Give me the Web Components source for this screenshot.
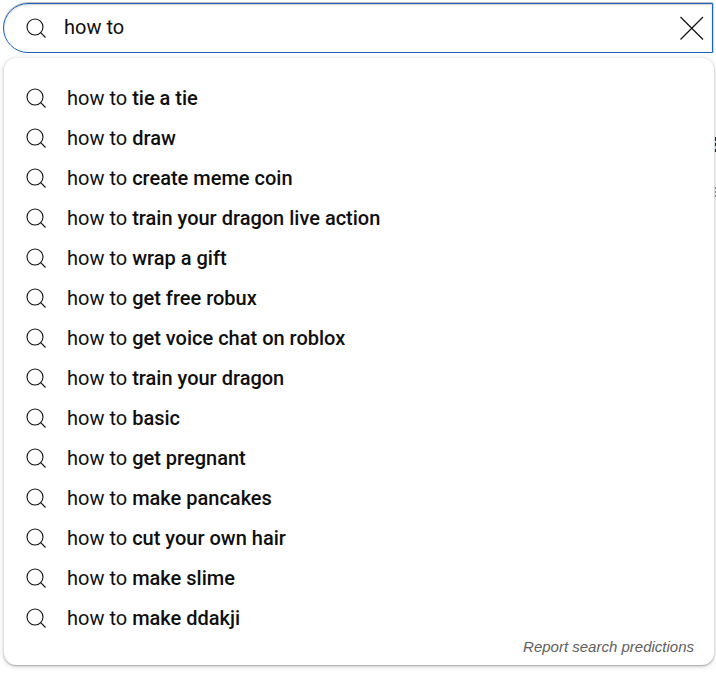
<!DOCTYPE html>
<html>
<head>
<meta charset="utf-8">
<style>
  html, body { margin: 0; padding: 0; background: #fff; }
  body { width: 716px; height: 675px; overflow: hidden; font-family: Roboto, sans-serif; color: #0f0f0f; }
  .page { display: flex; flex-direction: column; padding: 3px 2px 0 3px; gap: 5px; }
</style>
</head>
<body>
<edge-peek></edge-peek>
<div class="page">
  <search-box value="how to"></search-box>
  <suggest-panel>
    <suggest-row rest="tie a tie"></suggest-row>
    <suggest-row rest="draw"></suggest-row>
    <suggest-row rest="create meme coin"></suggest-row>
    <suggest-row rest="train your dragon live action"></suggest-row>
    <suggest-row rest="wrap a gift"></suggest-row>
    <suggest-row rest="get free robux"></suggest-row>
    <suggest-row rest="get voice chat on roblox"></suggest-row>
    <suggest-row rest="train your dragon"></suggest-row>
    <suggest-row rest="basic"></suggest-row>
    <suggest-row rest="get pregnant"></suggest-row>
    <suggest-row rest="make pancakes"></suggest-row>
    <suggest-row rest="cut your own hair"></suggest-row>
    <suggest-row rest="make slime"></suggest-row>
    <suggest-row rest="make ddakji"></suggest-row>
  </suggest-panel>
</div>
<script>
const SEARCH_ICON = `<svg width="24" height="24" viewBox="0 0 24 24" fill="none" stroke="#0f0f0f" stroke-width="1.1">
  <circle cx="11" cy="11" r="8"/><path d="M16.7 16.7 21.5 21.5"/></svg>`;

class SearchBox extends HTMLElement {
    constructor() {
        super();
        this.attachShadow({ mode: 'open' });
    }

    connectedCallback() {
        this.shadowRoot.innerHTML = `
            <style>
            :host {
                display: flex;
                align-items: center;
                height: 50px;
                box-sizing: border-box;
                margin-right: 1px;
                border: 1px solid #1c62b9;
                border-radius: 25px 0 0 25px;
                padding: 0 0 0 20px;
                box-shadow: inset 0 1px 2px rgba(0,0,0,.2), 0 -1px 0 rgba(0,0,0,.25), 1px 0 0 #d8d8d8;
            }
            .icon { display: flex; width: 24px; height: 24px; }
            .text { flex: 1; margin-left: 16px; margin-top: -2px; font-size: 20px; color: #0f0f0f; }
            .clear { display: flex; width: 40px; height: 40px; }
            </style>
            <span class="icon">${SEARCH_ICON}</span>
            <span class="text">${this.getAttribute('value')}</span>
            <span class="clear">
                <svg width="40" height="40" viewBox="0 0 40 40" fill="none" stroke="#0f0f0f" stroke-width="1.2">
                    <path d="M8.5 9 31 31.5M31 9 8.5 31.5"/>
                </svg>
            </span>`;
    }
}

class SuggestPanel extends HTMLElement {
    constructor() {
        super();
        this.attachShadow({ mode: 'open' });
    }

    connectedCallback() {
        this.shadowRoot.innerHTML = `
            <style>
            :host {
                display: block;
                position: relative;
                box-sizing: border-box;
                height: 607px;
                margin-left: 1px;
                border-radius: 12px;
                background: #fff;
                padding: 20px 0 0;
                box-shadow: 0 1px 2px rgba(0,0,0,.3), 0 1px 6px rgba(0,0,0,.15);
            }
            .report {
                display: block;
                text-align: right;
                padding-right: 20px;
                font: italic 15px "Liberation Sans", Arial, sans-serif;
                line-height: 18px;
                color: #606060;
            }
            </style>
            <slot></slot>
            <span class="report">Report search predictions</span>`;
    }
}

class SuggestRow extends HTMLElement {
    constructor() {
        super();
        this.attachShadow({ mode: 'open' });
    }

    connectedCallback() {
        this.shadowRoot.innerHTML = `
            <style>
            :host {
                display: flex;
                align-items: center;
                height: 40px;
                padding-left: 20px;
                font-size: 20px;
                color: #0f0f0f;
            }
            .icon { display: flex; width: 24px; height: 24px; }
            .text { margin-left: 19px; }
            b { font-weight: 500; }
            </style>
            <span class="icon">${SEARCH_ICON}</span>
            <span class="text">how to <b>${this.getAttribute('rest')}</b></span>`;
    }
}

// bits of the page underneath that show past the panel's right edge
class EdgePeek extends HTMLElement {
    constructor() {
        super();
        this.attachShadow({ mode: 'open' });
    }

    connectedCallback() {
        this.shadowRoot.innerHTML = `
            <style>
            :host { position: absolute; left: 715px; top: 137px; width: 1px; height: 60px; }
            div { position: absolute; left: 0; width: 1px; }
            </style>
            <div style="top:0;height:4px;background:#222"></div>
            <div style="top:4px;height:2px;background:#bfe3ea"></div>
            <div style="top:6px;height:3px;background:#222"></div>
            <div style="top:9px;height:3px;background:#bfe3ea"></div>
            <div style="top:12px;height:3px;background:#222"></div>
            <div style="top:50px;height:2px;background:#888"></div>
            <div style="top:54px;height:2px;background:#888"></div>
            <div style="top:58px;height:2px;background:#888"></div>`;
    }
}

customElements.define('search-box', SearchBox);
customElements.define('suggest-panel', SuggestPanel);
customElements.define('suggest-row', SuggestRow);
customElements.define('edge-peek', EdgePeek);
</script>
</body>
</html>
